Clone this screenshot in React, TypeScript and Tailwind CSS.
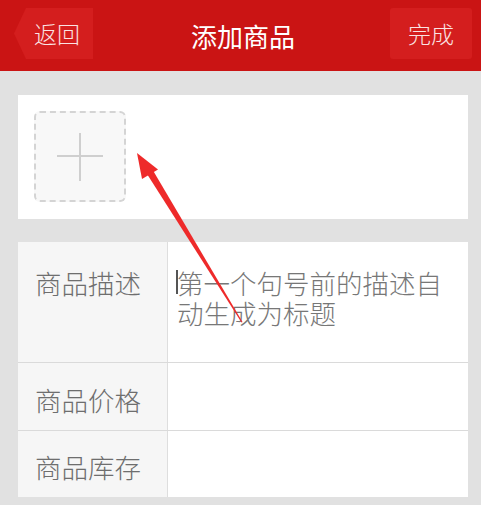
export default function App() {
  const rows = [
    { label: "商品描述", tall: true },
    { label: "商品价格", tall: false },
    { label: "商品库存", tall: false },
  ];

  return (
    <div className="relative min-h-[505px] w-[481px] bg-[#e1e1e1] font-['Noto_Sans_CJK_SC','Noto_Sans',sans-serif]">
      {/* 顶部导航 */}
      <header className="grid h-[71px] grid-cols-[1fr_auto_1fr] items-start bg-[#ca1414] pl-[14px] pr-[9px] pt-[8px]">
        <div className="flex">
          <button className="flex h-[51px] w-[79px] items-center bg-[#d41e1e] pl-[20px] text-[23px] font-light text-[#fbe3e3] [clip-path:polygon(12px_0,100%_0,100%_100%,12px_100%,0_50%)]">
            返回
          </button>
        </div>
        <h1 className="pt-[5px] text-[26px] leading-[46px] text-white">添加商品</h1>
        <div className="flex justify-end">
          <button className="flex h-[51px] w-[82px] items-center justify-center rounded-[3px] bg-[#d41e1e] text-[23px] font-light text-[#fbe3e3]">
            完成
          </button>
        </div>
      </header>

      <div className="flex flex-col gap-[23px] pl-[18px] pr-[13px] pt-[24px]">
        {/* 图片上传 */}
        <div className="bg-white px-[16px] pb-[17px] pt-[16px]">
          <div className="flex h-[91px] w-[92px] items-center justify-center rounded-[6px] border-2 border-dashed border-[#d4d4d4] bg-[#f8f8f8]">
            <svg width="48" height="50" viewBox="0 0 48 50" fill="none">
              <path d="M24 1v48M1 24h46" stroke="#cfcfcf" strokeWidth="2" />
            </svg>
          </div>
        </div>

        {/* 商品信息 */}
        <div className="flex flex-col bg-white">
          {rows.map((row, i) => (
            <div
              key={row.label}
              className={`flex ${row.tall ? "h-[120px]" : i === 1 ? "h-[68px]" : "h-[67px]"} ${i > 0 ? "border-t border-[#dadada]" : ""}`}
            >
              <div
                className={`flex w-[150px] shrink-0 border-r border-[#dedede] bg-[#f6f6f6] pl-[17px] text-[26.5px] font-light leading-[30px] text-[#6e6e6e] ${row.tall ? "items-start pt-[26px]" : "items-center pt-[6px]"}`}
              >
                {row.label}
              </div>
              <div className="flex-1 pl-[9px] pr-[12px] pt-[26px] text-[26.5px] font-light leading-[30px] text-[#777]">
                {row.tall && (
                  <p className="relative">
                    <span className="absolute left-[-1px] top-[2px] h-[24px] w-[2px] bg-[#555]" />
                    第一个句号前的描述自动生成为标题
                  </p>
                )}
              </div>
            </div>
          ))}
        </div>
      </div>

      {/* 红色标注箭头 */}
      <svg className="pointer-events-none absolute left-0 top-0" width="481" height="505" viewBox="0 0 481 505">
        <polygon points="137,153 158,169.5 142,179" fill="#ee2a2a" />
        <polygon points="147,174 153,170.5 242.5,322 241.5,322.5" fill="#ee2a2a" />
      </svg>
    </div>
  );
}
